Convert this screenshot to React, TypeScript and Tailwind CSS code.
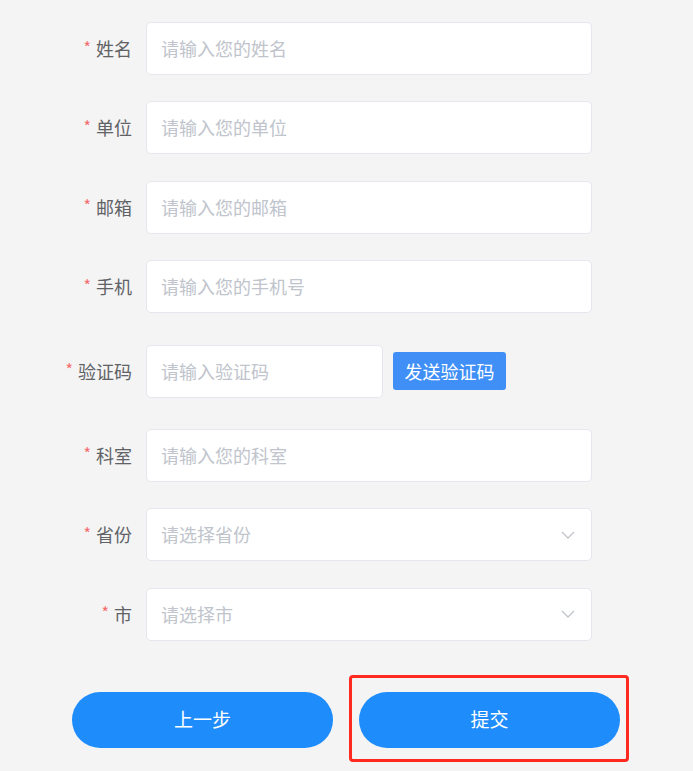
const font = { fontFamily: '"Microsoft YaHei", "Noto Sans CJK SC", "Noto Sans", sans-serif' }

function Label({ text }: { text: string }) {
  return (
    <div className="w-[146px] shrink-0 pr-[14px] flex justify-end items-center text-[18px] text-[#606266]">
      <span className="text-[#f56c6c] text-[16px] mr-[5px] leading-none -mt-[4px]">*</span>
      <span>{text}</span>
    </div>
  )
}

function Chevron() {
  return (
    <svg width="14" height="8" viewBox="0 0 14 8" fill="none" className="shrink-0">
      <polyline points="1,1 7,7 13,1" stroke="#c0c4cc" strokeWidth="1.3" />
    </svg>
  )
}

const fields = [
  { label: "姓名", placeholder: "请输入您的姓名" },
  { label: "单位", placeholder: "请输入您的单位" },
  { label: "邮箱", placeholder: "请输入您的邮箱" },
  { label: "手机", placeholder: "请输入您的手机号" },
]

export default function App() {
  return (
    <div style={font} className="w-[693px] h-[771px] bg-[#f4f4f4] pt-[22px] overflow-hidden">
      <div className="flex flex-col gap-[26.4px]">
        {fields.map((f) => (
          <div key={f.label} className="flex h-[53px]">
            <Label text={f.label} />
            <div className="w-[446px] h-[53px] bg-white border border-[#e4e7ed] rounded-[5px] px-[14px] flex items-center text-[18px] text-[#c0c4cc]">
              {f.placeholder}
            </div>
          </div>
        ))}

        <div className="flex h-[63px] items-center">
          <Label text="验证码" />
          <div className="w-[237px] h-[53px] bg-white border border-[#e4e7ed] rounded-[5px] px-[14px] flex items-center text-[18px] text-[#c0c4cc]">
            请输入验证码
          </div>
          <button className="ml-[10px] w-[113px] h-[38px] bg-[#3f8ff7] rounded-[3px] text-white text-[18px] flex items-center justify-center">
            发送验证码
          </button>
        </div>

        <div className="flex h-[53px]">
          <Label text="科室" />
          <div className="w-[446px] h-[53px] bg-white border border-[#e4e7ed] rounded-[5px] px-[14px] flex items-center text-[18px] text-[#c0c4cc]">
            请输入您的科室
          </div>
        </div>

        {[
          { label: "省份", placeholder: "请选择省份" },
          { label: "市", placeholder: "请选择市" },
        ].map((f) => (
          <div key={f.label} className="flex h-[53px]">
            <Label text={f.label} />
            <div className="w-[446px] h-[53px] bg-white border border-[#e4e7ed] rounded-[5px] pl-[14px] pr-[16px] flex items-center justify-between text-[18px] text-[#c0c4cc]">
              <span>{f.placeholder}</span>
              <Chevron />
            </div>
          </div>
        ))}
      </div>

      <div className="flex justify-center gap-[26px] mt-[51px] pr-[1px]">
        <button className="w-[261px] h-[56px] rounded-full bg-[#1e8cfa] text-white text-[19px]">上一步</button>
        <div className="relative">
          <button className="w-[261px] h-[56px] rounded-full bg-[#1e8cfa] text-white text-[19px]">提交</button>
          <div className="absolute left-[-10px] right-[-9px] top-[-17px] bottom-[-14px] border-[3px] border-[#ff2a1f] rounded-[4px] pointer-events-none" />
        </div>
      </div>
    </div>
  )
}
